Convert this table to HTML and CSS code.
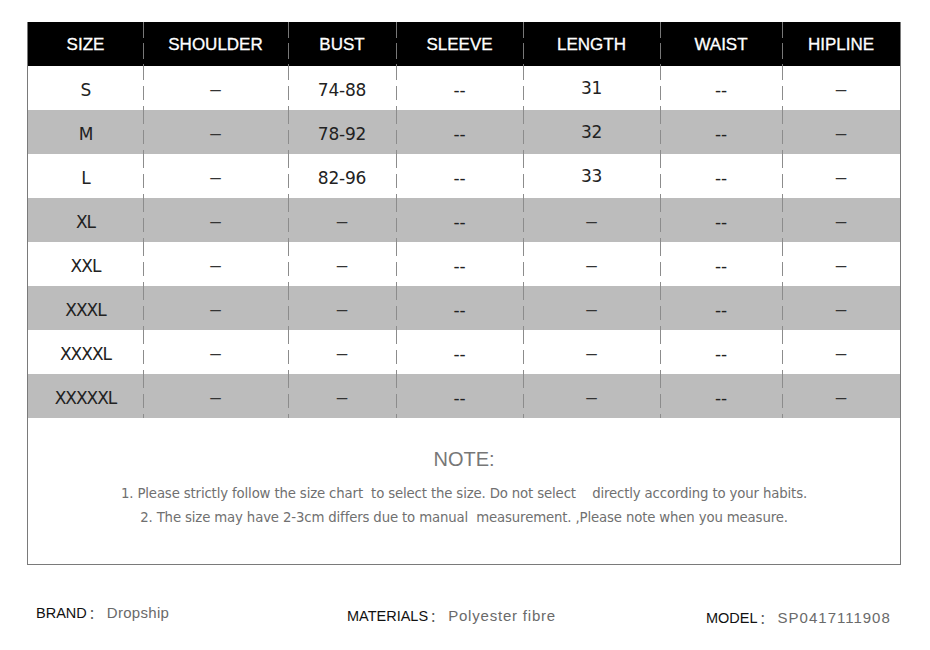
FILE: index.html
```html
<!DOCTYPE html>
<html>
<head>
<meta charset="utf-8">
<link rel="stylesheet" href="styles.css">
</head>
<body>
<div class="chart">
  <div class="grid">
    <div class="cell head">SIZE</div><div class="cell head dv">SHOULDER</div><div class="cell head dv">BUST</div><div class="cell head dv">SLEEVE</div><div class="cell head dv">LENGTH</div><div class="cell head dv">WAIST</div><div class="cell head dv">HIPLINE</div>

    <div class="cell sz">S</div><div class="cell dv en">–</div><div class="cell dv">74-88</div><div class="cell dv">--</div><div class="cell dv up">31</div><div class="cell dv">--</div><div class="cell dv en">–</div>

    <div class="cell g sz">M</div><div class="cell g dv en">–</div><div class="cell g dv">78-92</div><div class="cell g dv">--</div><div class="cell g dv up">32</div><div class="cell g dv">--</div><div class="cell g dv en">–</div>

    <div class="cell sz">L</div><div class="cell dv en">–</div><div class="cell dv">82-96</div><div class="cell dv">--</div><div class="cell dv up">33</div><div class="cell dv">--</div><div class="cell dv en">–</div>

    <div class="cell g sz">XL</div><div class="cell g dv en">–</div><div class="cell g dv en">–</div><div class="cell g dv">--</div><div class="cell g dv en">–</div><div class="cell g dv">--</div><div class="cell g dv en">–</div>

    <div class="cell sz">XXL</div><div class="cell dv en">–</div><div class="cell dv en">–</div><div class="cell dv">--</div><div class="cell dv en">–</div><div class="cell dv">--</div><div class="cell dv en">–</div>

    <div class="cell g sz">XXXL</div><div class="cell g dv en">–</div><div class="cell g dv en">–</div><div class="cell g dv">--</div><div class="cell g dv en">–</div><div class="cell g dv">--</div><div class="cell g dv en">–</div>

    <div class="cell sz">XXXXL</div><div class="cell dv en">–</div><div class="cell dv en">–</div><div class="cell dv">--</div><div class="cell dv en">–</div><div class="cell dv">--</div><div class="cell dv en">–</div>

    <div class="cell g sz">XXXXXL</div><div class="cell g dv en">–</div><div class="cell g dv en">–</div><div class="cell g dv">--</div><div class="cell g dv en">–</div><div class="cell g dv">--</div><div class="cell g dv en">–</div>
  </div>
  <div class="note">
    <div class="note-title">NOTE:</div>
    <div class="note-line">1. Please strictly follow the size chart  to select the size. Do not select    directly according to your habits.</div>
    <div class="note-line second">2. The size may have 2-3cm differs due to manual  measurement. ,Please note when you measure.</div>
  </div>
</div>
<div class="footer">
  <div class="info brand"><span class="label">BRAND</span><span class="colon">：</span><span class="value">Dropship</span></div>
  <div class="info materials"><span class="label">MATERIALS</span><span class="colon">：</span><span class="value">Polyester fibre</span></div>
  <div class="info model"><span class="label">MODEL</span><span class="colon">：</span><span class="value">SP0417111908</span></div>
</div>
</body>
</html>
```

FILE: styles.css
```css
html, body {
  margin: 0;
  padding: 0;
  background: #ffffff;
}

body {
  font-family: "DejaVu Sans", "Liberation Sans", sans-serif;
  color: #222;
}

.chart {
  margin: 22px 0 0 27px;
  width: 872px;
  border-left: 1px solid #7a7a7a;
  border-right: 1px solid #7a7a7a;
  border-bottom: 1px solid #7a7a7a;
}

.grid {
  display: grid;
  grid-template-columns: 115px 145px 108px 127px 137px 122px 118px;
  grid-auto-rows: 44px;
}

.cell {
  display: flex;
  align-items: center;
  justify-content: center;
  font-size: 17px;
  color: #222;
  letter-spacing: -0.2px;
  padding-top: 4px;
  box-sizing: border-box;
}

.cell.sz {
  letter-spacing: -1px;
}

.cell.en {
  font-family: "Liberation Sans", sans-serif;
  font-size: 19px;
  color: #333;
  padding-top: 1px;
}

.cell.up {
  padding-top: 0;
  padding-bottom: 0;
}

.cell.head {
  background-color: #000;
  color: #fff;
  font-family: "Liberation Sans", sans-serif;
  font-size: 17px;
  letter-spacing: 0;
  padding-top: 2px;
  -webkit-text-stroke: 0.3px #fff;
}

.cell.g {
  background-color: #bcbcbc;
}

.cell.dv {
  background-image: repeating-linear-gradient(to bottom, #8c8c8c 0, #8c8c8c 14px, transparent 14px, transparent 20px);
  background-repeat: no-repeat;
  background-size: 1px 100%;
  background-position: left top;
}

.cell.head.dv {
  background-image: repeating-linear-gradient(to bottom, #777 0, #777 16px, transparent 16px, transparent 21px);
}

.note {
  height: 146px;
  box-sizing: border-box;
  padding-top: 30px;
  text-align: center;
  font-family: "Liberation Sans", sans-serif;
  color: #707070;
}

.note-title {
  font-size: 20px;
  color: #777;
  line-height: 22px;
  margin-bottom: 12px;
}

.note-line {
  font-family: "DejaVu Sans", sans-serif;
  font-size: 13.3px;
  line-height: 24px;
  white-space: pre;
  letter-spacing: -0.15px;
  padding-left: 0;
}

.footer {
  display: flex;
  align-items: flex-start;
  padding-left: 36px;
  margin-top: 38px;
  font-family: "Liberation Sans", sans-serif;
}

.info {
  display: flex;
  align-items: baseline;
  font-size: 14.5px;
}

.brand {
  width: 311px;
}

.materials {
  width: 359px;
  margin-top: 3px;
}

.model {
  margin-top: 5px;
}

.label {
  color: #111;
}

.colon {
  color: #555;
  font-family: "Noto Sans CJK SC", sans-serif;
  font-size: 13px;
  margin: 0 5px 0 2px;
}

.value {
  color: #6a6a6a;
  font-size: 15px;
  letter-spacing: 0.3px;
}

.materials .value {
  letter-spacing: 0.8px;
}

.model .value {
  letter-spacing: 1px;
}
```
